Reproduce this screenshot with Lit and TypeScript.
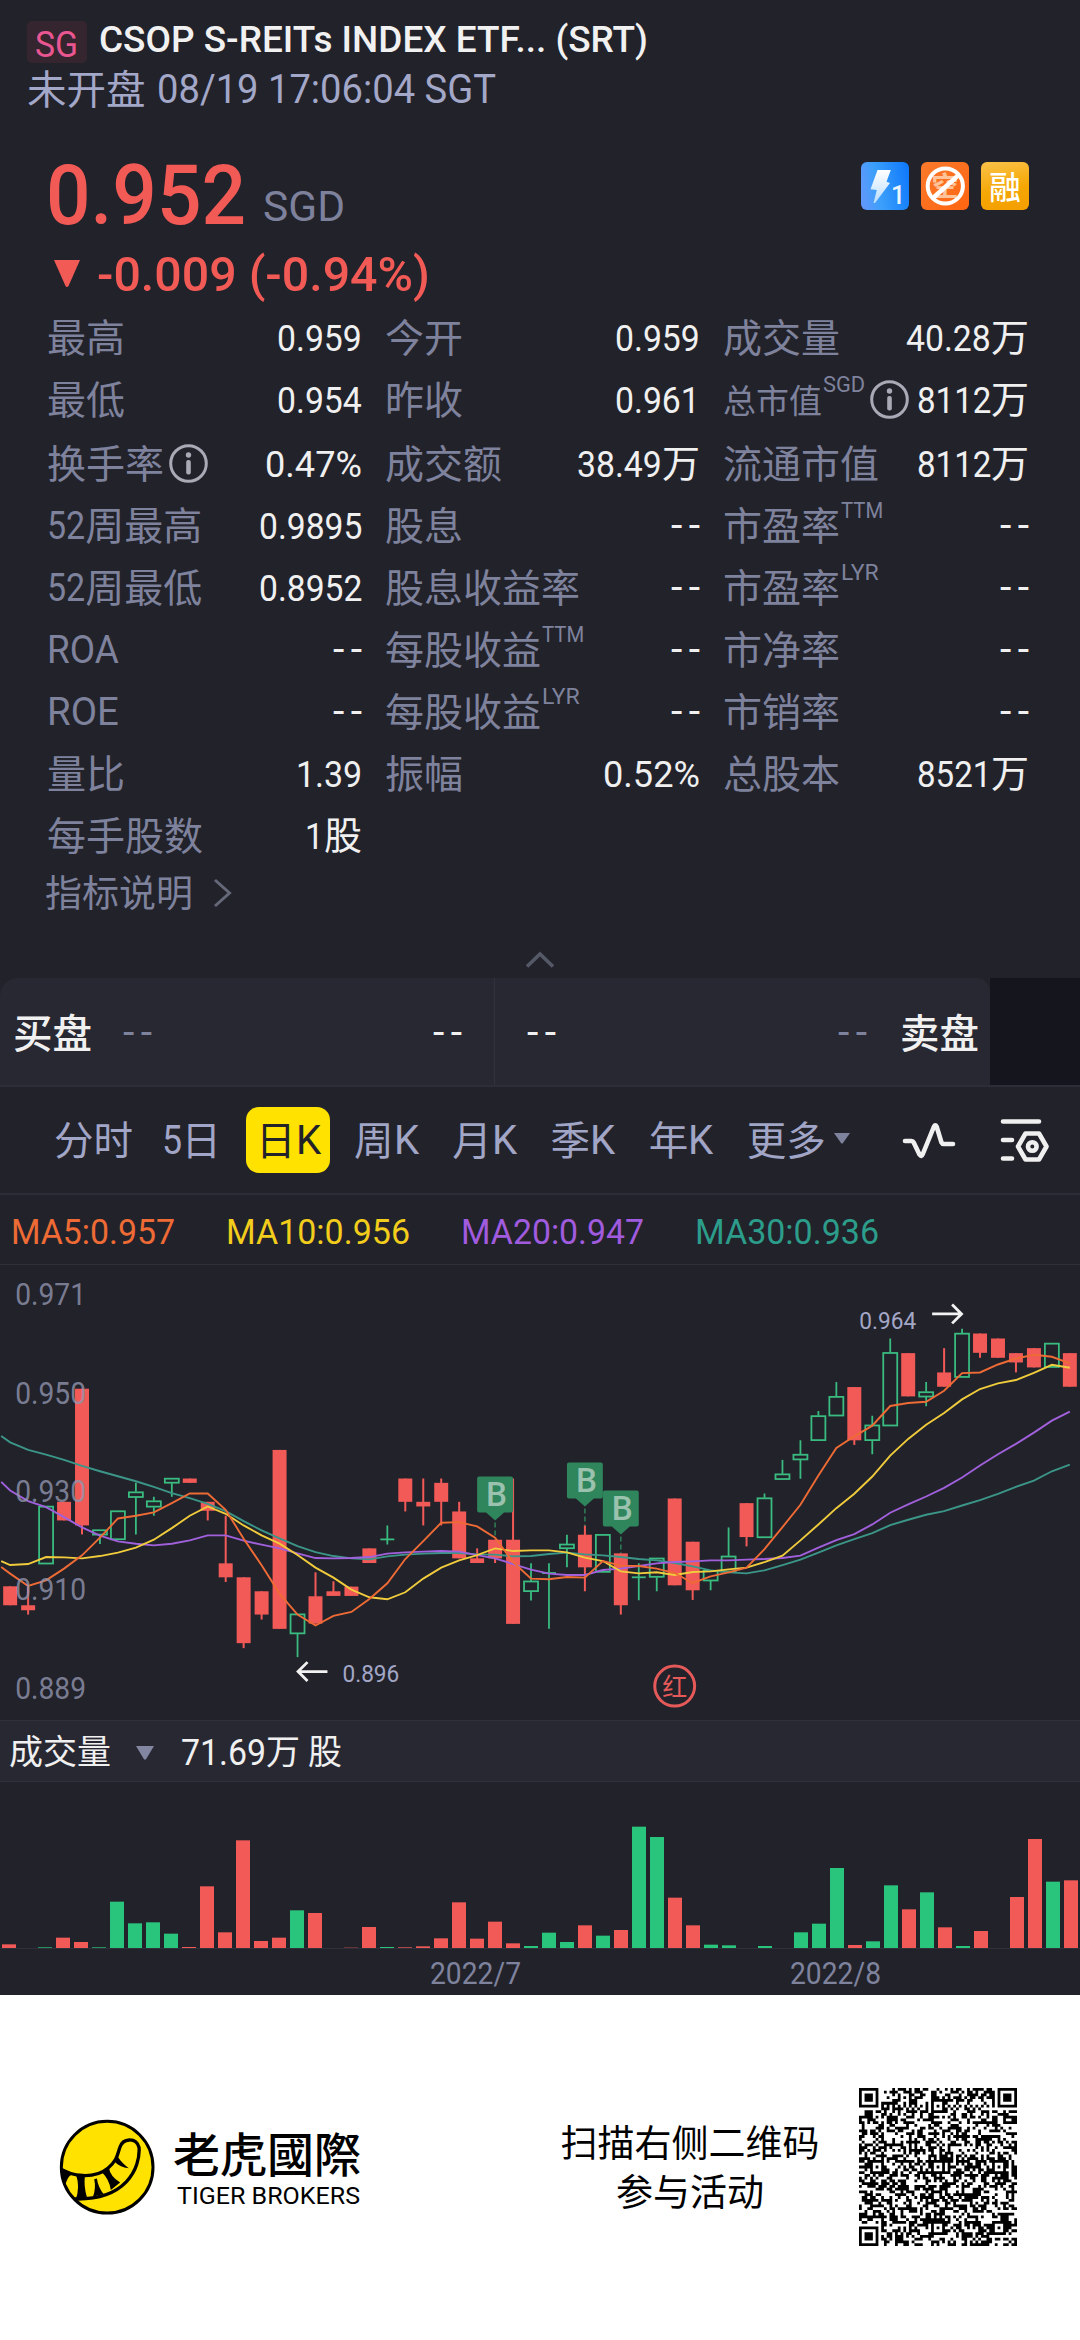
import { LitElement, css, html, nothing, svg } from "lit";
import { customElement, property } from "lit/decorators.js";
import { classMap } from "lit/directives/class-map.js";

/* advance widths of the narrow face, in em */
const ADVANCE: Record<string, number> = {
  ".": 0.28,
  "%": 0.83,
  "-": 0.42,
  " ": 0.24,
  "/": 0.42,
  L: 0.5,
  Y: 0.56,
};

const measure = (text: string, size: number) =>
  [...text].reduce((sum, c) => sum + size * (ADVANCE[c] ?? (/\d/.test(c) ? 0.503 : 0.63)), 0);

/** Latin text and digits, condensed to a fixed width */
@customElement("narrow-text")
export class NarrowText extends LitElement {
  @property() text = "";
  @property({ type: Number }) size = 37;
  @property({ type: Number }) w = 0;
  @property({ type: Number }) weight = 400;

  override render() {
    const dashes = this.text === "--";
    const w = dashes ? 29 : this.w || measure(this.text, this.size);
    return html`
      <svg width=${w} height=${this.size}>
        <text
          x="0"
          y=${this.size * 0.855}
          font-size=${dashes ? 41 : this.size}
          font-weight=${this.weight}
          textLength=${w}
          lengthAdjust=${dashes ? "spacing" : "spacingAndGlyphs"}
        >${this.text}</text>
      </svg>
    `;
  }

  static override styles = css`
    :host {
      display: block;
      flex: none;
    }

    svg {
      display: block;
      overflow: visible;
      fill: currentColor;
      font-family: Roboto, "Liberation Sans", sans-serif;
    }
  `;
}

/** Splits a string in Latin and Chinese runs */
const runs = (text: string, size = 37, weight = 400) =>
  text
    .split(/([\x21-\x7e]+)/)
    .filter(Boolean)
    .map((part) =>
      /^[\x21-\x7e]/.test(part)
        ? html`<narrow-text .text=${part} .size=${size} .weight=${weight}></narrow-text>`
        : html`<span class="cjk">${part}</span>`
    );

interface Stat {
  label: string;
  value: string;
  sup?: string;
  info?: boolean;
  small?: boolean;
}

const STATS: Stat[] = [
  { label: "最高", value: "0.959" },
  { label: "今开", value: "0.959" },
  { label: "成交量", value: "40.28万" },
  { label: "最低", value: "0.954" },
  { label: "昨收", value: "0.961" },
  { label: "总市值", value: "8112万", sup: "SGD", info: true, small: true },
  { label: "换手率", value: "0.47%", info: true },
  { label: "成交额", value: "38.49万" },
  { label: "流通市值", value: "8112万" },
  { label: "52周最高", value: "0.9895" },
  { label: "股息", value: "--" },
  { label: "市盈率", value: "--", sup: "TTM" },
  { label: "52周最低", value: "0.8952" },
  { label: "股息收益率", value: "--" },
  { label: "市盈率", value: "--", sup: "LYR" },
  { label: "ROA", value: "--" },
  { label: "每股收益", value: "--", sup: "TTM" },
  { label: "市净率", value: "--" },
  { label: "ROE", value: "--" },
  { label: "每股收益", value: "--", sup: "LYR" },
  { label: "市销率", value: "--" },
  { label: "量比", value: "1.39" },
  { label: "振幅", value: "0.52%" },
  { label: "总股本", value: "8521万" },
  { label: "每手股数", value: "1股" },
];

const TABS = ["分时", "5日", "日K", "周K", "月K", "季K", "年K", "更多"];

const LEGEND = [
  { text: "MA5:0.957", w: 164, cls: "ma5" },
  { text: "MA10:0.956", w: 184, cls: "ma10" },
  { text: "MA20:0.947", w: 183, cls: "ma20" },
  { text: "MA30:0.936", w: 184, cls: "ma30" },
];

/* up, high, top, bottom, low: one row per day, in thirds of a pixel */
const CANDLES: [number, number, number, number, number][] = [
  [0, 978, 978, 1035, 1035], [0, 980, 1035, 1050, 1063], [1, 737, 737, 911, 911],
  [0, 724, 724, 780, 780], [0, 384, 384, 795, 822], [1, 808, 808, 824, 851],
  [1, 751, 751, 838, 838], [1, 667, 694, 711, 822], [1, 709, 721, 740, 766],
  [1, 653, 653, 668, 709], [0, 654, 654, 667, 667], [0, 724, 724, 751, 780],
  [0, 766, 909, 951, 965], [0, 951, 951, 1149, 1164], [0, 993, 993, 1063, 1078],
  [0, 568, 568, 1106, 1106], [1, 1061, 1061, 1121, 1191], [0, 936, 1008, 1090, 1090],
  [0, 963, 993, 1007, 1007], [0, 979, 979, 1007, 1007], [0, 864, 864, 908, 908],
  [1, 795, 837, 837, 852], [0, 654, 654, 724, 753], [0, 654, 724, 738, 795],
  [0, 654, 667, 724, 795], [0, 724, 753, 894, 894], [0, 864, 894, 908, 908],
  [0, 838, 838, 894, 908], [0, 654, 838, 1091, 1091], [1, 909, 962, 994, 1021],
  [1, 909, 938, 938, 1106], [1, 823, 851, 865, 921], [0, 795, 823, 921, 993],
  [1, 822, 822, 936, 936], [0, 879, 879, 1035, 1063], [1, 909, 951, 951, 1020],
  [1, 893, 893, 951, 993], [0, 714, 714, 975, 975], [0, 844, 844, 990, 1019],
  [1, 930, 930, 962, 990], [1, 801, 887, 935, 935], [0, 728, 728, 830, 858],
  [1, 699, 712, 832, 832], [1, 598, 640, 657, 657], [1, 539, 581, 598, 655],
  [1, 451, 465, 540, 540], [1, 364, 407, 466, 466], [0, 379, 379, 539, 553],
  [1, 465, 493, 540, 581], [1, 233, 275, 496, 496], [0, 277, 277, 407, 407],
  [1, 364, 393, 409, 437], [0, 262, 335, 378, 378], [1, 204, 217, 350, 350],
  [0, 218, 218, 276, 291], [0, 233, 233, 291, 291], [0, 277, 277, 305, 335],
  [0, 262, 262, 320, 320], [1, 247, 247, 320, 320], [0, 277, 277, 378, 378],
];

/* the first value lies on the left edge of the chart */
const AVERAGES = [
  {
    cls: "ma30",
    data: [526, 545, 568, 582, 598, 616, 632, 647, 662, 679, 698, 713, 730, 752, 782, 810, 834, 857, 875, 887, 894,
      897, 888, 883, 880, 878, 878, 882, 883, 888, 887, 881, 877, 882, 885, 890, 896, 900, 908, 918, 930, 936, 939,
      930, 914, 898, 877, 855, 836, 818, 794, 778, 763, 752, 735, 719, 700, 679, 660, 632, 612],
  },
  {
    cls: "ma20",
    data: [664, 690, 722, 740, 770, 801, 826, 843, 850, 855, 850, 840, 825, 825, 841, 853, 864, 879, 893, 894, 893,
      890, 880, 876, 874, 872, 874, 884, 894, 911, 928, 940, 944, 944, 929, 925, 917, 909, 905, 903, 900, 900, 898,
      896, 893, 886, 862, 839, 821, 792, 757, 732, 708, 682, 651, 615, 581, 550, 516, 480, 453],
  },
  {
    cls: "ma10",
    data: [902, 914, 911, 890, 891, 894, 887, 877, 862, 838, 803, 766, 738, 760, 795, 825, 850, 884, 922, 952, 988,
      1011, 1017, 996, 955, 922, 900, 884, 864, 872, 870, 870, 876, 892, 902, 933, 939, 936, 944, 935, 933, 927,
      922, 905, 886, 840, 792, 743, 700, 648, 585, 535, 492, 457, 416, 385, 368, 358, 336, 312, 321],
  },
  {
    cls: "ma5",
    data: [920, 940, 977, 960, 925, 885, 832, 774, 766, 756, 728, 699, 699, 748, 835, 915, 1000, 1063, 1096, 1067,
      1055, 1016, 969, 896, 842, 787, 785, 798, 832, 905, 955, 957, 950, 952, 902, 916, 917, 925, 938, 968, 948,
      936, 922, 866, 800, 733, 645, 562, 527, 495, 436, 427, 423, 390, 337, 335, 311, 293, 282, 288, 308],
  },
];

/* bar heights in thirds of a pixel, negative on a falling day */
const VOLUME = [
  -11, 0, 2, -31, -18, 2, 139, 74, 77, 43, -3, -185, -47, -323, -21, -31, 113, -105, 0, -1, -63, 3, -2, -5, -29,
  -137, -28, -79, -14, 6, 46, 18, -68, 37, -54, 364, 333, -151, -68, 10, 8, 0, 6, 0, 47, 73, 240, -9, 20, 188,
  -116, 167, -62, 6, -51, 0, -153, -327, 199, -203,
];

const PRICES = [
  { text: "0.971", y: 44 },
  { text: "0.950", y: 143 },
  { text: "0.930", y: 241.5 },
  { text: "0.910", y: 340 },
  { text: "0.889", y: 439 },
];

const BUYS = [
  { day: 27, y: 216, to: 278 },
  { day: 32, y: 202, to: 265 },
  { day: 34, y: 230, to: 293 },
];

const dayX = (i: number) => 9 + 18 * i;

function candle([up, high, top, bottom, low]: number[], i: number) {
  const x = dayX(i);
  const [h, t, b, l] = [high, top, bottom, low].map((v) => v / 3);
  if (!up) {
    return svg`<g class="down">
      <rect x=${x - 1} y=${h} width="2" height=${l - h}></rect>
      <rect x=${x - 7} y=${t} width="14" height=${b - t}></rect>
    </g>`;
  }
  return svg`<g class="up">
    <path d="M${x} ${h}V${t}M${x} ${b}V${l}"></path>
    ${
      b - t < 1
        ? svg`<path d="M${x - 7} ${t}h14"></path>`
        : svg`<rect x=${x - 7} y=${t + 0.5} width="14" height=${b - t - 1}></rect>`
    }
  </g>`;
}

const polyline = (data: number[]) =>
  data.map((v, i) => `${i === 0 ? 0 : dayX(i - 1)},${(v / 3).toFixed(1)}`).join(" ");

/** Version 10 code, 57 modules a side */
function qrPath() {
  const n = 57;
  const ring = (dx: number, dy: number, outer: number) => {
    const d = Math.max(Math.abs(dx), Math.abs(dy));
    return outer === 3 ? d !== 2 && d < 4 : d !== 1;
  };
  let seed = 20220819;
  let d = "";
  for (let y = 0; y < n; y++) {
    for (let x = 0; x < n; x++) {
      seed = (Math.imul(seed, 1664525) + 1013904223) >>> 0;
      let on = (seed >>> 16) % 100 < 51;
      if (x === 6 || y === 6) on = (x + y) % 2 === 0;
      for (const [cx, cy] of [[28, 6], [6, 28], [28, 28], [50, 28], [28, 50], [50, 50]]) {
        if (Math.abs(x - cx) < 3 && Math.abs(y - cy) < 3) on = ring(x - cx, y - cy, 2);
      }
      for (const [cx, cy] of [[3, 3], [53, 3], [3, 53]]) {
        if (Math.abs(x - cx) < 5 && Math.abs(y - cy) < 5) on = ring(x - cx, y - cy, 3);
      }
      if (on) d += `M${x} ${y}h1v1h-1z`;
    }
  }
  return d;
}

const QR = qrPath();

const infoIcon = html`
  <svg class="info" width="39" height="39" viewBox="0 0 39 39">
    <circle cx="19.5" cy="19.5" r="17.8" fill="none" stroke="currentColor" stroke-width="3"></circle>
    <circle cx="19.5" cy="11" r="2.7" fill="currentColor"></circle>
    <rect x="17.2" y="16" width="4.6" height="14.5" rx="2" fill="currentColor"></rect>
  </svg>
`;

/** Quote page */
@customElement("app-root")
export class AppRoot extends LitElement {
  private stat(s: Stat) {
    return html`
      <div class="stat">
        <div class=${classMap({ label: true, small: !!s.small })}>
          ${runs(s.label, 38)}
          ${s.sup ? html`<narrow-text class="sup" .text=${s.sup} .size=${22.3}></narrow-text>` : nothing}
          ${s.info ? infoIcon : nothing}
        </div>
        <div class="value">${runs(s.value)}</div>
      </div>
    `;
  }

  private badges() {
    return html`
      <div class="badges">
        <svg width="48" height="48" viewBox="0 0 48 48">
          <defs>
            <linearGradient id="blue" x1="0" y1="0.6" x2="1" y2="0.4">
              <stop offset="0" stop-color="#5f98fb"></stop>
              <stop offset="0.35" stop-color="#3ba0fb"></stop>
              <stop offset="1" stop-color="#127bfb"></stop>
            </linearGradient>
            <linearGradient id="bolt" x1="0" y1="0" x2="0" y2="1">
              <stop offset="0" stop-color="#fff"></stop>
              <stop offset="1" stop-color="#b9dcff"></stop>
            </linearGradient>
          </defs>
          <rect width="48" height="48" rx="6" fill="url(#blue)"></rect>
          <path d="M16.5 8H29.8L25.5 19.8L29 21L14 41H12.5L15.8 28L9.5 27.2Z" fill="url(#bolt)"></path>
          <text x="30" y="41.5" font-size="25" font-weight="500" fill="#eaf5ff">1</text>
        </svg>
        <svg width="48" height="48" viewBox="0 0 48 48">
          <defs>
            <linearGradient id="orange" x1="0" y1="0" x2="1" y2="1">
              <stop offset="0" stop-color="#f97a2c"></stop>
              <stop offset="1" stop-color="#ff6511"></stop>
            </linearGradient>
          </defs>
          <rect width="48" height="48" rx="6" fill="url(#orange)"></rect>
          <text x="10.5" y="34" font-size="27" font-weight="700" class="zh" fill="#ffc39a">空</text>
          <path d="M12 36L36.5 14" stroke="#fff" stroke-width="4.4"></path>
          <circle cx="24.3" cy="24" r="17.6" fill="none" stroke="#fff" stroke-width="4"></circle>
        </svg>
        <svg width="48" height="48" viewBox="0 0 48 48">
          <defs>
            <linearGradient id="gold" x1="0.3" y1="0" x2="0.5" y2="1">
              <stop offset="0" stop-color="#fac044"></stop>
              <stop offset="0.6" stop-color="#f5a704"></stop>
              <stop offset="1" stop-color="#f4a000"></stop>
            </linearGradient>
          </defs>
          <rect width="48" height="48" rx="6" fill="url(#gold)"></rect>
          <text x="8.3" y="36.5" font-size="31.5" font-weight="500" class="zh" fill="#fff">融</text>
        </svg>
      </div>
    `;
  }

  private chart() {
    return html`
      <svg class="chart" width="1080" height="456" viewBox="0 4 1080 456">
        ${CANDLES.map(candle)}
        ${AVERAGES.map((a) => svg`<polyline class=${a.cls} points=${polyline(a.data)}></polyline>`)}
        ${PRICES.map(
          (p) => svg`<text class="axis" x="14" y=${p.y} font-size="31" textLength="71"
            lengthAdjust="spacingAndGlyphs">${p.text}</text>`
        )}
        ${BUYS.map(({ day, y, to }) => {
          const x = dayX(day);
          return svg`<g>
            <path class="dash" d="M${x} ${y + 46}V${to}"></path>
            <path class="flag" d="M${x - 16} ${y}h32q2 0 2 2v32q0 2 -2 2h-7l-9 8l-9 -8h-7q-2 0 -2 -2v-32q0 -2 2 -2z"></path>
            <text class="buy" x=${x - 9} y=${y + 30} font-size="33" textLength="21"
              lengthAdjust="spacingAndGlyphs">B</text>
          </g>`;
        })}
        <path class="arrow" d="M327 411.5H298M307 402L297.5 411.5L307 421"></path>
        <text class="mark" x="342" y="422" font-size="23.5" textLength="57" lengthAdjust="spacingAndGlyphs">0.896</text>
        <path class="arrow" d="M933 53H962M953 43.5L962.5 53L953 62.5"></path>
        <text class="mark" x="860" y="68" font-size="23.5" textLength="57" lengthAdjust="spacingAndGlyphs">0.964</text>
        <circle class="dividend" cx="675" cy="426" r="20"></circle>
        <text class="zh red" x="662.5" y="435.5" font-size="25">红</text>
      </svg>
    `;
  }

  private volume() {
    return html`
      <svg class="volume" width="1080" height="213" viewBox="0 0 1080 213">
        <path class="base" d="M0 166.5H1080"></path>
        ${VOLUME.map(
          (v, i) => svg`<rect class=${v < 0 ? "fall" : "rise"} x=${dayX(i) - 7} y=${166 - Math.abs(v) / 3}
            width="14" height=${Math.abs(v) / 3}></rect>`
        )}
        <text x="430" y="202" font-size="31" textLength="91" lengthAdjust="spacingAndGlyphs">2022/7</text>
        <text x="790" y="202" font-size="31" textLength="91" lengthAdjust="spacingAndGlyphs">2022/8</text>
      </svg>
    `;
  }

  override render() {
    return html`
      <header>
        <div class="title">
          <div class="market"><narrow-text text="SG" size="36" w="43"></narrow-text></div>
          <narrow-text class="name" text="CSOP S-REITs INDEX ETF... (SRT)" size="37.5" w="549" weight="500"></narrow-text>
        </div>
        <div class="time">
          <span class="cjk">未开盘</span>
          <narrow-text text="08/19 17:06:04 SGT" size="40" w="339"></narrow-text>
        </div>
      </header>

      <section class="quote">
        <div class="price">
          <narrow-text text="0.952" size="83" w="200" weight="500"></narrow-text>
          <narrow-text class="currency" text="SGD" size="42" w="82"></narrow-text>
          ${this.badges()}
        </div>
        <div class="change">
          <svg width="26" height="28" viewBox="0 0 26 28"><path d="M0 1H26L14.5 27Q13 29 11.5 27Z"></path></svg>
          <narrow-text text="-0.009 (-0.94%)" size="49" w="333" weight="500"></narrow-text>
        </div>
      </section>

      <section class="stats">${STATS.map((s) => this.stat(s))}</section>
      <div class="explain">
        <span class="cjk">指标说明</span>
        <svg width="19" height="30" viewBox="0 0 19 30"><path d="M2 2L16.5 15L2 28"></path></svg>
      </div>
      <div class="fold">
        <svg width="30" height="18" viewBox="0 0 30 18"><path d="M2 15.5L15 3L28 15.5"></path></svg>
      </div>

      <section class="orders">
        <div class="side bid">
          <span class="cjk">买盘</span>
          <narrow-text class="dim" text="--"></narrow-text>
          <narrow-text class="end" text="--"></narrow-text>
        </div>
        <div class="side ask">
          <narrow-text text="--"></narrow-text>
          <narrow-text class="dim end" text="--"></narrow-text>
          <span class="cjk">卖盘</span>
        </div>
        <div class="blank"></div>
      </section>

      <nav>
        ${TABS.map((t) => html`<div class=${classMap({ tab: true, active: t === "日K" })}>${runs(t, 40)}</div>`)}
        <svg class="drop" width="16" height="11" viewBox="0 0 16 11"><path d="M0 0H16L9 10Q8 11 7 10Z"></path></svg>
        <svg class="tool wave" width="54" height="40" viewBox="0 0 54 40">
          <path d="M3 21H9.5Q11 21 11.7 22.5L17.5 34.5Q19.5 37.5 20.8 34L32 6.5Q33.3 4 34.6 6.5L39.5 22.5Q40.2 24 41.8 24H51"></path>
        </svg>
        <svg class="tool" width="49" height="44" viewBox="0 0 49 44">
          <path d="M3 3.5H39M3 22H12M3 40.5H12"></path>
          <path d="M25.5 15.5H39L46.5 28.5L39 41.5H25.5L18 28.5Z"></path>
          <circle cx="32.3" cy="28.5" r="4.3"></circle>
        </svg>
      </nav>

      <div class="legend">
        ${LEGEND.map((l) => html`<narrow-text class=${l.cls} .text=${l.text} .size=${34.5} .w=${l.w}></narrow-text>`)}
      </div>
      ${this.chart()}

      <div class="volbar">
        <span class="cjk">成交量</span>
        <svg width="18" height="14" viewBox="0 0 18 14"><path d="M0 0H18L10.2 13Q9 14.5 7.8 13Z"></path></svg>
        <narrow-text text="71.69" size="36" w="85"></narrow-text>
        <span class="cjk">万</span>
        <span class="cjk unit">股</span>
      </div>
      ${this.volume()}

      <footer>
        <svg class="logo" width="97" height="97" viewBox="58 117 292 292">
          <defs>
            <clipPath id="disc"><circle cx="203" cy="262" r="140"></circle></clipPath>
          </defs>
          <circle cx="203" cy="262" r="138" fill="#ffe200"></circle>
          <g clip-path="url(#disc)">
            <path
              d="M55 262C95 292 165 298 205 265C235 240 234 222 241 203C250 174 290 171 299 203C303 262 262 368 90 357"
              fill="none"
              stroke="#000"
              stroke-width="10"
            ></path>
            <path d="M60 268L98 284Q82 288 76 322L60 300Z"></path>
            <path d="M110 287L136 289Q132 318 142 352L108 360Q122 322 110 287Z"></path>
            <path d="M164 298L172 296Q176 322 192 343L160 351Q170 325 164 298Z"></path>
            <path d="M186 276L208 263Q212 290 242 308L214 331Q210 300 186 276Z"></path>
            <path d="M224 244L236 232Q246 248 268 265Q240 262 224 244Z"></path>
          </g>
          <circle cx="203" cy="262" r="138" fill="none" stroke="#000" stroke-width="9"></circle>
        </svg>
        <div class="brand">
          <div class="brand-zh">老虎國際</div>
          <narrow-text text="TIGER BROKERS" size="24" w="183"></narrow-text>
        </div>
        <div class="scan">扫描右侧二维码<br />参与活动</div>
        <svg class="qr" width="158" height="158" viewBox="0 0 57 57"><path d=${QR}></path></svg>
      </footer>
    `;
  }

  static override styles = css`
    :host {
      display: block;
      width: 1080px;
      height: 2340px;
      overflow: hidden;
      background: #22222b;
      color: #f0f0f0;
      font-family: "Noto Sans CJK SC", sans-serif;
    }

    * {
      box-sizing: border-box;
    }

    svg {
      display: block;
      flex: none;
      font-family: Roboto, "Liberation Sans", sans-serif;
    }

    .zh {
      font-family: "Noto Sans CJK SC", sans-serif;
    }

    .cjk {
      flex: none;
      font-size: 39px;
      line-height: 1;
      padding-bottom: 4px;
      white-space: pre;
    }

    header {
      height: 153px;
      padding: 20px 27px 0;
    }

    .title {
      display: flex;
      gap: 12px;
      height: 43px;
    }

    .market {
      width: 60px;
      height: 42px;
      margin-top: 1px;
      padding: 5px 0 0 8px;
      border-radius: 5px;
      background: #35252f;
      color: #ea5692;
    }

    .name {
      color: #f1f1f1;
    }

    .time {
      display: flex;
      align-items: center;
      gap: 11px;
      height: 51px;
      color: #a3a7c8;
    }

    .time .cjk {
      font-size: 39.5px;
    }

    .quote {
      height: 153px;
      padding: 0 51px 0 46px;
      color: #f25a56;
    }

    .price {
      display: flex;
      height: 83px;
    }

    .currency {
      margin: 32px 0 0 17px;
      color: #7d819b;
    }

    .badges {
      display: flex;
      gap: 12px;
      margin: 9px 0 0 auto;
    }

    .change {
      display: flex;
      align-items: center;
      gap: 17px;
      height: 74px;
      padding-left: 8px;
    }

    .change path,
    .drop path,
    .volbar path {
      fill: currentColor;
    }

    .stats {
      display: grid;
      grid-template-columns: 315px 315px 306px;
      grid-template-rows: 62px 64px repeat(7, 62px);
      column-gap: 23px;
      padding-left: 47px;
    }

    .stat {
      display: flex;
      justify-content: space-between;
      height: 62px;
    }

    .label,
    .value {
      display: flex;
      align-items: center;
    }

    .value .cjk {
      font-size: 38px;
    }

    .label {
      color: #7e829c;
    }

    .label.small .cjk {
      font-size: 33px;
      padding-bottom: 0;
    }

    .sup {
      align-self: flex-start;
      margin: 5px 0 0 1px;
    }

    .info {
      margin-left: 5px;
      color: #a9aab5;
    }

    .explain {
      display: flex;
      align-items: center;
      gap: 20px;
      height: 54px;
      padding-left: 45px;
      color: #7e829c;
    }

    .explain .cjk {
      font-size: 37px;
    }

    .explain path,
    .fold path {
      fill: none;
      stroke: #646878;
      stroke-width: 3;
    }

    .fold {
      display: flex;
      justify-content: center;
      height: 58px;
      padding-top: 31px;
    }

    .fold path {
      stroke: #555867;
      stroke-width: 3.6;
    }

    .orders {
      display: flex;
      height: 109px;
      border-bottom: 2px solid #2d2d38;
    }

    .side {
      display: flex;
      align-items: center;
      width: 495px;
      padding-top: 2px;
      background: #282832;
    }

    .side .cjk {
      font-size: 39.5px;
      font-weight: 500;
    }

    .bid {
      gap: 31px;
      padding-left: 13px;
      padding-right: 32px;
      border-right: 1px solid #32323d;
      border-top-left-radius: 18px;
    }

    .ask {
      gap: 33px;
      padding-left: 32px;
      padding-right: 11px;
      border-top-right-radius: 14px;
    }

    .end {
      margin-left: auto;
    }

    .dim {
      color: #7e829c;
    }

    .blank {
      flex: 1;
      background: #15151e;
    }

    nav {
      display: flex;
      align-items: center;
      height: 108px;
      padding: 0 0 1px 54px;
      border-bottom: 2px solid #2d2d38;
      color: #a1a5c6;
    }

    .tab {
      display: flex;
      align-items: center;
      height: 66px;
      margin-right: 33.5px;
    }

    .tab .cjk {
      font-size: 39.5px;
    }

    .tab:nth-child(1) {
      margin-right: 28.5px;
    }

    .tab:nth-child(2) {
      margin-right: 25px;
    }

    .tab.active {
      width: 84px;
      margin-right: 24px;
      padding-left: 10px;
      border-radius: 13px;
      background: #ffe200;
      color: #22222b;
    }

    .tab:nth-child(8) {
      margin-right: 8px;
    }

    .drop {
      margin-top: -3px;
      color: #7e829c;
    }

    .tool path,
    .tool circle {
      fill: none;
      stroke: #f0f0f0;
      stroke-width: 4.6;
      stroke-linejoin: round;
      stroke-linecap: round;
    }

    .tool {
      margin-left: 44px;
    }

    .tool.wave {
      margin-left: 52px;
    }

    .legend {
      display: flex;
      align-items: center;
      gap: 51px;
      height: 69px;
      padding-left: 11px;
      padding-top: 4px;
    }

    .ma5 {
      color: #ee6b35;
      stroke: #ee6b35;
    }

    .ma10 {
      color: #f2cd1c;
      stroke: #f0cc3c;
    }

    .ma20 {
      color: #a05bdf;
      stroke: #a160dc;
    }

    .ma30 {
      color: #2c9d8a;
      stroke: #3b9688;
    }

    .legend narrow-text {
      stroke: none;
    }

    .chart {
      border-top: 1px solid #30303b;
    }

    .chart polyline {
      fill: none;
      stroke-width: 1.9;
    }

    .down {
      fill: #f25a57;
    }

    .up rect,
    .up path {
      fill: none;
      stroke: #3abb7f;
      stroke-width: 1.8;
    }

    .axis {
      fill: #9296ae;
      fill-opacity: 0.8;
    }

    .mark {
      fill: #a3a7c6;
    }

    .dash {
      fill: none;
      stroke: #2f7f58;
      stroke-width: 1.5;
      stroke-dasharray: 5 3;
    }

    .flag {
      fill: #2f855c;
    }

    .buy {
      fill: #9bc2ae;
      font-weight: 500;
    }

    .arrow {
      fill: none;
      stroke: #f2f2f2;
      stroke-width: 2.8;
    }

    .dividend {
      fill: none;
      stroke: #e55a59;
      stroke-width: 3;
    }

    .red {
      fill: #e55a59;
    }

    .volbar {
      display: flex;
      align-items: center;
      height: 62px;
      padding: 1px 0 0 9px;
      border: solid #2f303b;
      border-width: 1px 0;
      background: #282832;
    }

    .volbar .cjk {
      font-size: 34px;
    }

    .volbar svg {
      margin: 3px 27px 0 25px;
      color: #8286a0;
    }

    .volbar .unit {
      margin-left: 8px;
    }

    .volume text {
      fill: #7e829c;
    }

    .base {
      stroke: #30303b;
    }

    .rise {
      fill: #2ac57c;
    }

    .fall {
      fill: #f25a57;
    }

    footer {
      display: flex;
      align-items: flex-start;
      height: 345px;
      background: #fff;
      color: #000;
    }

    .logo {
      margin: 124px 0 0 59px;
    }

    .brand {
      width: 189px;
      margin: 127px 0 0 17px;
    }

    .brand-zh {
      height: 61px;
      font-family: "Noto Sans CJK TC", sans-serif;
      font-size: 47px;
      font-weight: 500;
      line-height: 60px;
      white-space: nowrap;
    }

    .brand narrow-text {
      margin-left: 4px;
    }

    .scan {
      width: 260px;
      margin: 122px 0 0 198px;
      font-size: 37px;
      line-height: 49px;
      text-align: center;
    }

    .qr {
      margin: 93px 0 0 39px;
    }
  `;
}

declare global {
  interface HTMLElementTagNameMap {
    "app-root": AppRoot;
    "narrow-text": NarrowText;
  }
}
